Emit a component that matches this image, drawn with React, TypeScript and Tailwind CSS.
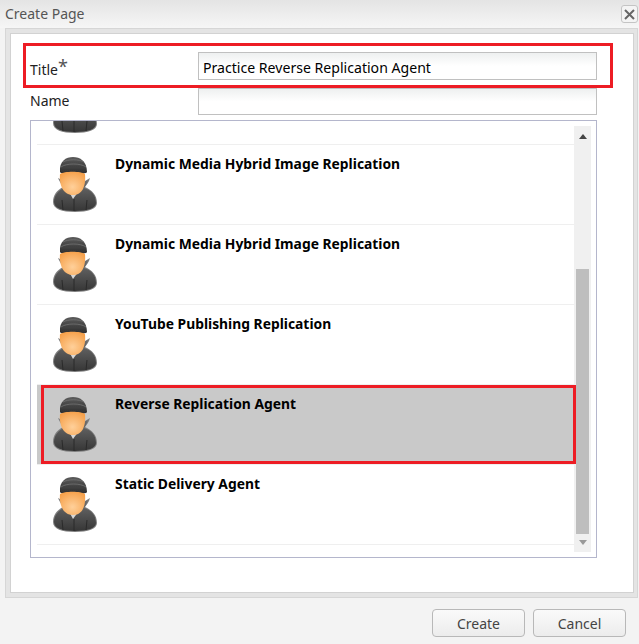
import React from "react";

function Agent() {
  return (
    <svg width="48" height="60" viewBox="0 0 48 60" className="block">
      <defs>
        <linearGradient id="coat" x1="0" y1="0" x2="0" y2="1">
          <stop offset="0" stopColor="#6e6e6e" />
          <stop offset="1" stopColor="#363636" />
        </linearGradient>
        <linearGradient id="hat" x1="0" y1="0" x2="0" y2="1">
          <stop offset="0" stopColor="#5c5c5c" />
          <stop offset="1" stopColor="#2c2c2c" />
        </linearGradient>
        <radialGradient id="face" cx="0.5" cy="0.65" r="0.7">
          <stop offset="0" stopColor="#ffd09a" />
          <stop offset="1" stopColor="#f59f48" />
        </radialGradient>
        <filter id="soft" x="-10%" y="-10%" width="120%" height="120%">
          <feGaussianBlur stdDeviation="0.6" />
        </filter>
      </defs>
      <path d="M1 48 C1 41 5 36 11 33 C9 29 7 27 6 24 L12 27 L33 27 L38 24 C37 28 35 30 33 33 C40 36 45 41 45 49 C45 55 36 58 23 58 C10 58 1 55 1 48 Z" fill="#808080" filter="url(#soft)" />
      <path d="M2 48 C2 41 7 36 12 34 C10 30 9 28 8 26 L13 28 L32 28 L36 26 C35 29 34 31 32 34 C39 36 44 41 44 49 C44 54 36 57 23 57 C10 57 2 54 2 48 Z" fill="url(#coat)" />
      <path d="M15 34 L21 45 L29 34 L29 30 L15 30 Z" fill="#d8d8d8" />
      <path d="M22 45 L22 57 M10 46 L11 56 M35 46 L34 56" stroke="#2a2a2a" strokeWidth="1" fill="none" />
      <path d="M8 18 C7 7 14 3 21 3 C28 3 35 7 35 18 C35 21 8 21 8 18 Z" fill="url(#hat)" filter="url(#soft)" />
      <path d="M9 13 C14 9 29 9 34 13 M11 8 C16 5 27 5 32 8" stroke="#727272" strokeWidth="0.8" fill="none" />
      <path d="M8 20 C12 17 29 17 33 20 C34 31 31 41 21 41 C11 41 7 31 8 20 Z" fill="url(#face)" />
    </svg>
  );
}

function Row({ label, selected }: { label: string; selected?: boolean }) {
  return (
    <div className={selected ? "flex h-20 shrink-0 border-b border-[#efefef] bg-[#c9c9c9] pl-[15px]" : "flex h-20 shrink-0 border-b border-[#efefef] pl-[15px]"}>
      <div className="mt-[9px] mr-[15px] w-[48px]"><Agent /></div>
      <div className="pt-[9px] text-[13.85px] leading-5 font-bold text-black">{label}</div>
    </div>
  );
}

export default function App() {
  return (
    <div className="flex h-[644px] w-[639px] flex-col overflow-hidden bg-[#f3f3f3] font-['Noto_Sans','DejaVu_Sans',sans-serif] text-[14px] text-[#222]">
      <div className="flex h-[28px] shrink-0 items-center justify-between bg-gradient-to-b from-[#e4e4e4] to-[#f6f6f6] pr-[1px] pl-[5px]">
        <span className="-mt-[1px] text-[14px] text-[#555]">Create Page</span>
        <span className="flex h-[18px] w-[17px] items-center justify-center rounded-[3px] border border-[#c4c4c4] bg-[#f4f4f4]">
          <svg width="11" height="11" viewBox="0 0 11 11"><path d="M1 1 L10 10 M10 1 L1 10" stroke="#666" strokeWidth="2" /></svg>
        </span>
      </div>
      <div className="ml-[5px] h-[570px] w-[633px] shrink-0 border border-[#d6d6d6] bg-[#e4e4e4] pt-[4px] pr-[3px] pb-[4px] pl-[4px]">
        <div className="h-full w-full border border-[#d2d2d2] bg-white pt-[9px] pl-[12px]">
          <div className="flex h-[45px] w-[590px] items-center border-3 border-[#ed1c24] pl-[4px]">
            <div className="w-[168px] pt-[7px] text-[14px] leading-5">Title<span className="relative -top-[2px] text-[18px] leading-none text-[#555]">*</span></div>
            <div className="h-[28px] w-[399px] border border-[#c0c0c0] bg-gradient-to-b from-[#eef0f0] via-white to-white pl-[4px] text-[14.1px] leading-[29px] text-black">Practice Reverse Replication Agent</div>
          </div>
          <div className="flex h-[32px] items-start pl-[7px]">
            <div className="w-[168px] pt-[3px] text-[14px] leading-5">Name</div>
            <div className="h-[27px] w-[399px] border border-[#c0c0c0] bg-gradient-to-b from-[#eef0f0] via-white to-white" />
          </div>
          <div className="ml-[7px] flex h-[438px] w-[567px] border border-[#b4b6cc]">
            <div className="flex h-full w-[543px] flex-col overflow-hidden pl-[6px]">
              <div className="relative h-[24px] shrink-0 overflow-hidden border-b border-[#efefef]">
                <div className="absolute -top-[46px] left-[15px]"><Agent /></div>
              </div>
              <Row label="Dynamic Media Hybrid Image Replication" />
              <Row label="Dynamic Media Hybrid Image Replication" />
              <Row label="YouTube Publishing Replication" />
              <Row label="Reverse Replication Agent" selected />
              <Row label="Static Delivery Agent" />
            </div>
            <div className="mt-[5px] flex h-[426px] w-[17px] flex-col items-center bg-[#f0f0f0]">
              <div className="flex h-[143px] w-full justify-center pt-[8px]">
                <svg width="8" height="5" viewBox="0 0 8 5"><path d="M4 0 L8 5 L0 5 Z" fill="#444" /></svg>
              </div>
              <div className="h-[265px] w-[13px] bg-[#bebebe]" />
              <div className="flex w-full flex-1 justify-center pt-[6px]">
                <svg width="8" height="5" viewBox="0 0 8 5"><path d="M0 0 L8 0 L4 5 Z" fill="#999" /></svg>
              </div>
            </div>
          </div>
        </div>
      </div>
      <div className="flex flex-1 justify-end gap-[8px] pt-[11px] pr-[13px]">
        <button className="h-[28px] w-[93px] rounded-[4px] border border-[#b8b8b8] bg-gradient-to-b from-[#fafafa] to-[#ececec] text-[14px] text-[#444]">Create</button>
        <button className="h-[28px] w-[93px] rounded-[4px] border border-[#b8b8b8] bg-gradient-to-b from-[#fafafa] to-[#ececec] text-[14px] text-[#444]">Cancel</button>
      </div>
      <div className="pointer-events-none absolute top-[385px] left-[41px] h-[79px] w-[535px] border-3 border-[#ed1c24]" />
    </div>
  );
}
